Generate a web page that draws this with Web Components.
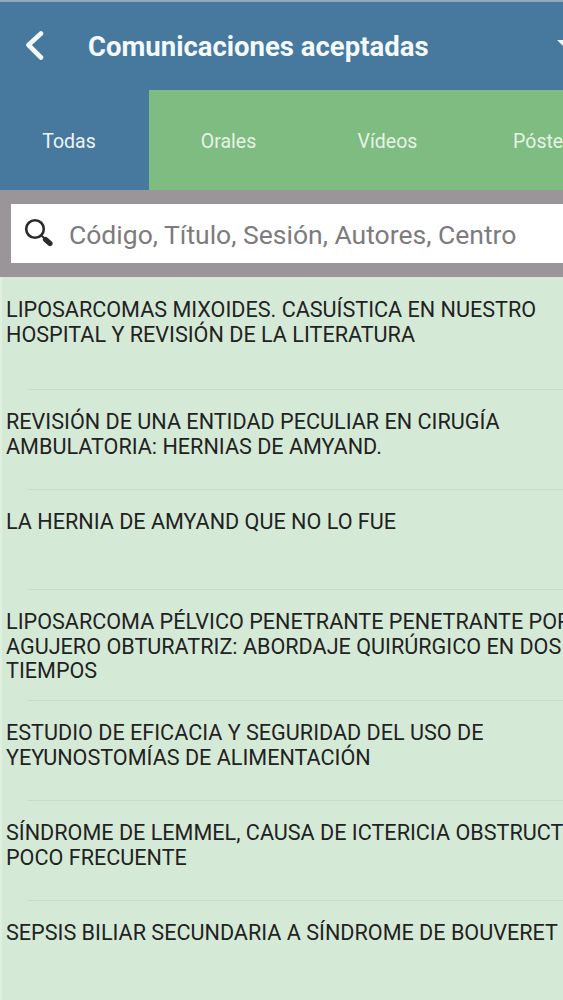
<!DOCTYPE html>
<html lang="es"><head><meta charset="utf-8"><title>Comunicaciones aceptadas</title>
<style>
html,body{margin:0;padding:0;background:#d5ead6;height:1000px;overflow:hidden}
body{font-family:Roboto,"Liberation Sans",sans-serif}
</style></head><body>
<app-screen>
  <app-header title="Comunicaciones aceptadas"></app-header>
  <tab-bar>
    <tab-item active>Todas</tab-item>
    <tab-item>Orales</tab-item>
    <tab-item>Vídeos</tab-item>
    <tab-item>Pósters</tab-item>
  </tab-bar>
  <search-bar placeholder="Código, Título, Sesión, Autores, Centro"></search-bar>
  <item-list>
    <list-row first>LIPOSARCOMAS MIXOIDES. CASUÍSTICA EN NUESTRO HOSPITAL Y REVISIÓN DE LA LITERATURA</list-row>
    <list-row>REVISIÓN DE UNA ENTIDAD PECULIAR EN CIRUGÍA AMBULATORIA: HERNIAS DE AMYAND.</list-row>
    <list-row>LA HERNIA DE AMYAND QUE NO LO FUE</list-row>
    <list-row>LIPOSARCOMA PÉLVICO PENETRANTE PENETRANTE POR AGUJERO OBTURATRIZ: ABORDAJE QUIRÚRGICO EN DOS TIEMPOS</list-row>
    <list-row>ESTUDIO DE EFICACIA Y SEGURIDAD DEL USO DE YEYUNOSTOMÍAS DE ALIMENTACIÓN</list-row>
    <list-row>SÍNDROME DE LEMMEL, CAUSA DE ICTERICIA OBSTRUCTIVA POCO FRECUENTE</list-row>
    <list-row>SEPSIS BILIAR SECUNDARIA A SÍNDROME DE BOUVERET</list-row>
  </item-list>
</app-screen>
<script>
function def(name, html){
  customElements.define(name, class extends HTMLElement{
    constructor(){super();this.attachShadow({mode:'open'}).innerHTML=html;}
    connectedCallback(){
      this.shadowRoot.querySelectorAll('[data-attr]').forEach(n=>{n.textContent=this.getAttribute(n.dataset.attr)||'';});
    }
  });
}
def('app-screen',`<style>:host{display:flex;flex-direction:column;width:563px;height:1000px;overflow:hidden;color:#222}</style><slot></slot>`);
def('app-header',`<style>
:host{display:flex;align-items:center;height:90px;box-sizing:border-box;background:#47799f;border-top:2px solid #8fa9bb;color:#f4f9fb;padding:0 0 0 24px;flex:none;position:relative}
svg.back{flex:none;width:20px;height:30px;margin-right:44px;margin-top:-3px}
.t{font:700 27.5px/32px Roboto,"Liberation Sans",sans-serif;white-space:nowrap;margin-top:1px}
svg.drop{position:absolute;right:0;top:37px;width:6px;height:8px}
</style>
<svg class="back" viewBox="0 0 20 30"><path d="M17 3.5 L4.5 15 L17 27.5" fill="none" stroke="#f4f9fb" stroke-width="4.6" stroke-linecap="round" stroke-linejoin="round"/></svg>
<span class="t" data-attr="title"></span>
<svg class="drop" viewBox="0 0 6 8"><path d="M0 1 H6 V7 Z" fill="#e8f4f7"/></svg>`);
def('tab-bar',`<style>:host{display:flex;height:100px;flex:none;background:#7fbc82;width:700px}</style><slot></slot>`);
def('tab-item',`<style>
:host{display:flex;align-items:center;justify-content:center;width:159px;flex:none;box-sizing:border-box;color:#e6f3e6;font:400 19.5px/24px Roboto,"Liberation Sans",sans-serif}
:host([active]){background:#47799f;color:#eef5f9;width:149px;padding-right:11px}
span{margin-top:3px}
</style><span><slot></slot></span>`);
def('search-bar',`<style>
:host{display:block;height:87px;flex:none;box-sizing:border-box;background:#9a9599;padding:14px 0 14px 11px}
.box{display:flex;align-items:center;height:59px;background:#fff;padding-left:13px}
svg{width:30px;height:30px;flex:none;margin-right:15px;margin-top:-1px}
.p{font:400 26.5px/30px Roboto,"Liberation Sans",sans-serif;color:#7d7b7e;white-space:nowrap;margin-top:3px}
</style><div class="box"><svg viewBox="0 0 30 30"><circle cx="11" cy="11" r="8.8" fill="none" stroke="#2b2b2b" stroke-width="2.6"/><path d="M17 17 L21 21" stroke="#2b2b2b" stroke-width="2"/><path d="M21.5 21.5 L26 25.5" stroke="#2b2b2b" stroke-width="5.2" stroke-linecap="round"/></svg><span class="p" data-attr="placeholder"></span></div>`);
def('item-list',`<style>:host{display:block;width:620px;flex:1;background:#d5ead6;box-shadow:inset 2px 0 #dff0df}</style><slot></slot>`);
def('list-row',`<style>
:host{display:block;box-sizing:border-box;min-height:100px;padding:20px 0 16.9px 6px;background:linear-gradient(#c6dec8,#c6dec8) no-repeat 28px 100%/100% 1px;font:400 21.6px/24.7px Roboto,"Liberation Sans",sans-serif;color:#222}
:host([first]){min-height:113px;padding-top:21px}
</style><slot></slot>`);
</script>
</body></html>
